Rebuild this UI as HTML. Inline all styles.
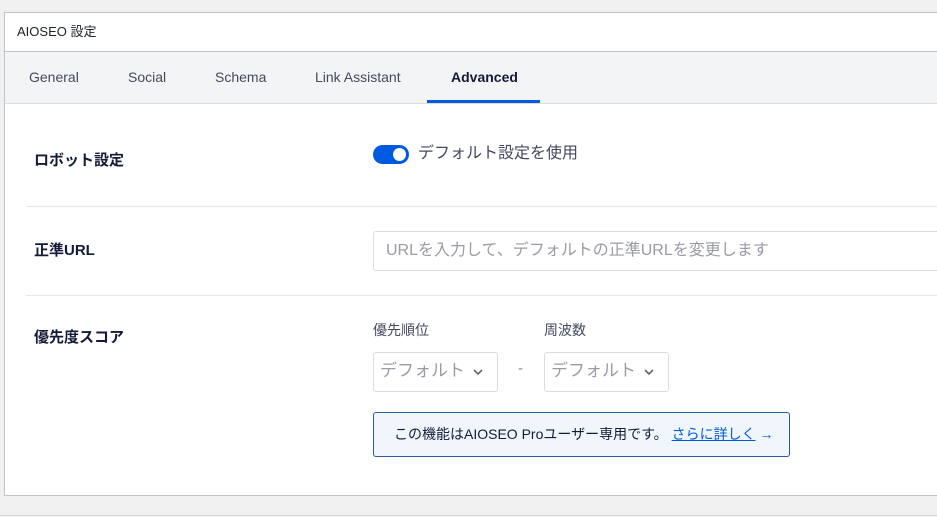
<!DOCTYPE html>
<html><head><meta charset="utf-8"><style>
*{box-sizing:border-box;margin:0;padding:0}
body{width:937px;height:517px;overflow:hidden;background:#f0f0f1;font-family:"Liberation Sans","Noto Sans CJK JP",sans-serif;color:#141b38;position:relative;line-height:1.2}
.panel{position:absolute;left:4px;top:12px;width:940px;height:484px;background:#fff;border:1px solid #c3c4c7}
.hd{height:39px;border-bottom:1px solid #c3c4c7;font-size:13px;padding:11px 0 0 12px;color:#1d2327}
.tabs{height:52px;background:#f3f4f5;border-bottom:1px solid #dcdcde;position:relative;font-size:14px;color:#434960}
.tabs span{position:absolute;top:17px}
.ul{position:absolute;left:422px;width:113px;top:48px;height:3px;background:#005ae0}
.abs{position:absolute}
.lbl{font-weight:bold;font-size:15px;color:#141b38}
.sep{position:absolute;left:26px;right:0;height:1px;background:#e8e8eb}
.sel{position:absolute;top:352px;width:125px;height:40px;border:1px solid #dcdde3;border-radius:3px;font-size:17px;color:#9a9ca6;padding:8px 0 0 6px}
.sel svg{position:absolute;right:14px;top:16px}
</style></head><body>
<div class="panel">
<div class="hd">AIOSEO 設定</div>
<div class="tabs">
<span style="left:24px">General</span><span style="left:123px">Social</span><span style="left:210px">Schema</span><span style="left:310px">Link Assistant</span><span style="left:446px;font-weight:bold;color:#141b38">Advanced</span>
<div class="ul"></div></div>
</div>
<div class="abs lbl" style="left:34px;top:152px">ロボット設定</div>
<div class="abs" style="left:373px;top:145px;width:36px;height:19px;border-radius:10px;background:#005ae0"><div style="position:absolute;right:3px;top:3px;width:13px;height:13px;border-radius:50%;background:#fff"></div></div>
<div class="abs" style="left:418px;top:144px;font-size:16px;color:#434960">デフォルト設定を使用</div>
<div class="sep" style="top:206px"></div>
<div class="abs lbl" style="left:34px;top:242px">正準URL</div>
<div class="abs" style="left:373px;top:231px;width:570px;height:40px;border:1px solid #dcdde3;border-radius:3px;font-size:16px;color:#9a9ca6;padding:9px 0 0 12px">URLを入力して、デフォルトの正準URLを変更します</div>
<div class="sep" style="top:295px"></div>
<div class="abs lbl" style="left:34px;top:329px">優先度スコア</div>
<div class="abs" style="left:373px;top:322px;font-size:14px;color:#434960">優先順位</div>
<div class="abs" style="left:544px;top:322px;font-size:14px;color:#434960">周波数</div>
<div class="sel" style="left:373px">デフォルト<svg width="10" height="7" viewBox="0 0 10 7"><path d="M1 1l4 4 4-4" stroke="#666" stroke-width="1.6" fill="none"/></svg></div>
<div class="abs" style="left:518px;top:360px;color:#888;font-size:15px">-</div>
<div class="sel" style="left:544px">デフォルト<svg width="10" height="7" viewBox="0 0 10 7"><path d="M1 1l4 4 4-4" stroke="#666" stroke-width="1.6" fill="none"/></svg></div>
<div class="abs" style="left:373px;top:412px;width:417px;height:45px;background:#f0f6fc;border:1px solid #2c5b9a;border-radius:3px;font-size:14px;padding:13px 0 0 20px;color:#141b38">この機能はAIOSEO Proユーザー専用です。 <span style="color:#005ae0;text-decoration:underline">さらに詳しく</span> <span style="color:#005ae0">→</span></div>
<div class="abs" style="left:0;top:515px;width:937px;height:1px;background:#dcdcde"></div>
</body></html>
